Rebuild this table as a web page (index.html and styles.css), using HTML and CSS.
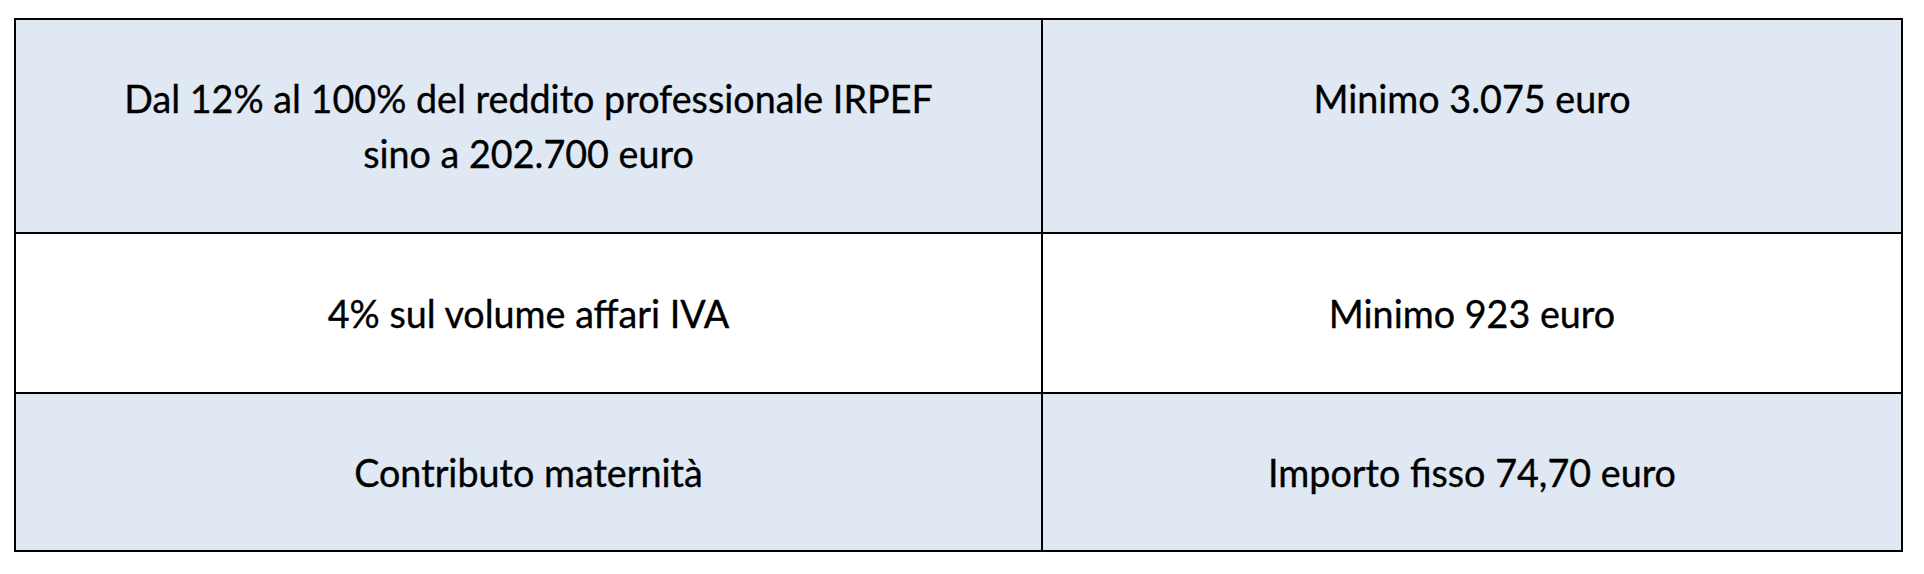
FILE: index.html
```html
<!DOCTYPE html>
<html lang="it">
<head>
<meta charset="utf-8">
<title>Contributi</title>
<link rel="stylesheet" href="styles.css">
</head>
<body>
<table class="fees">
  <colgroup><col class="c1"><col class="c2"></colgroup>
  <tr class="r1 shaded">
    <td>Dal 12% al 100% del reddito professionale IRPEF<br>sino a 202.700 euro</td>
    <td>Minimo 3.075 euro</td>
  </tr>
  <tr class="r2">
    <td>4% sul volume affari IVA</td>
    <td>Minimo 923 euro</td>
  </tr>
  <tr class="r3 shaded">
    <td>Contributo maternità</td>
    <td>Importo fisso 74,70 euro</td>
  </tr>
</table>
</body>
</html>
```
FILE: styles.css
```css
html, body {
  margin: 0;
  padding: 0;
  background: #ffffff;
}
body {
  padding: 18px 0 0 14px;
  font-family: Lato, "Liberation Sans", sans-serif;
  color: #000;
}
.fees {
  border-collapse: collapse;
  table-layout: fixed;
  width: 1889px;
}
.c1 { width: 1027px; }
.fees td {
  border: 2px solid #000;
  text-align: center;
  vertical-align: middle;
  font-size: 37.7px;
  line-height: 55px;
  padding: 0;
  -webkit-text-stroke: 0.35px #000;
}
.shaded td { background: #dfe8f3; }
.r1 { height: 214px; }
.r1 td {
  vertical-align: top;
  padding-top: 51px;
}
.r2 { height: 160px; }
.r3 { height: 158px; }
```
